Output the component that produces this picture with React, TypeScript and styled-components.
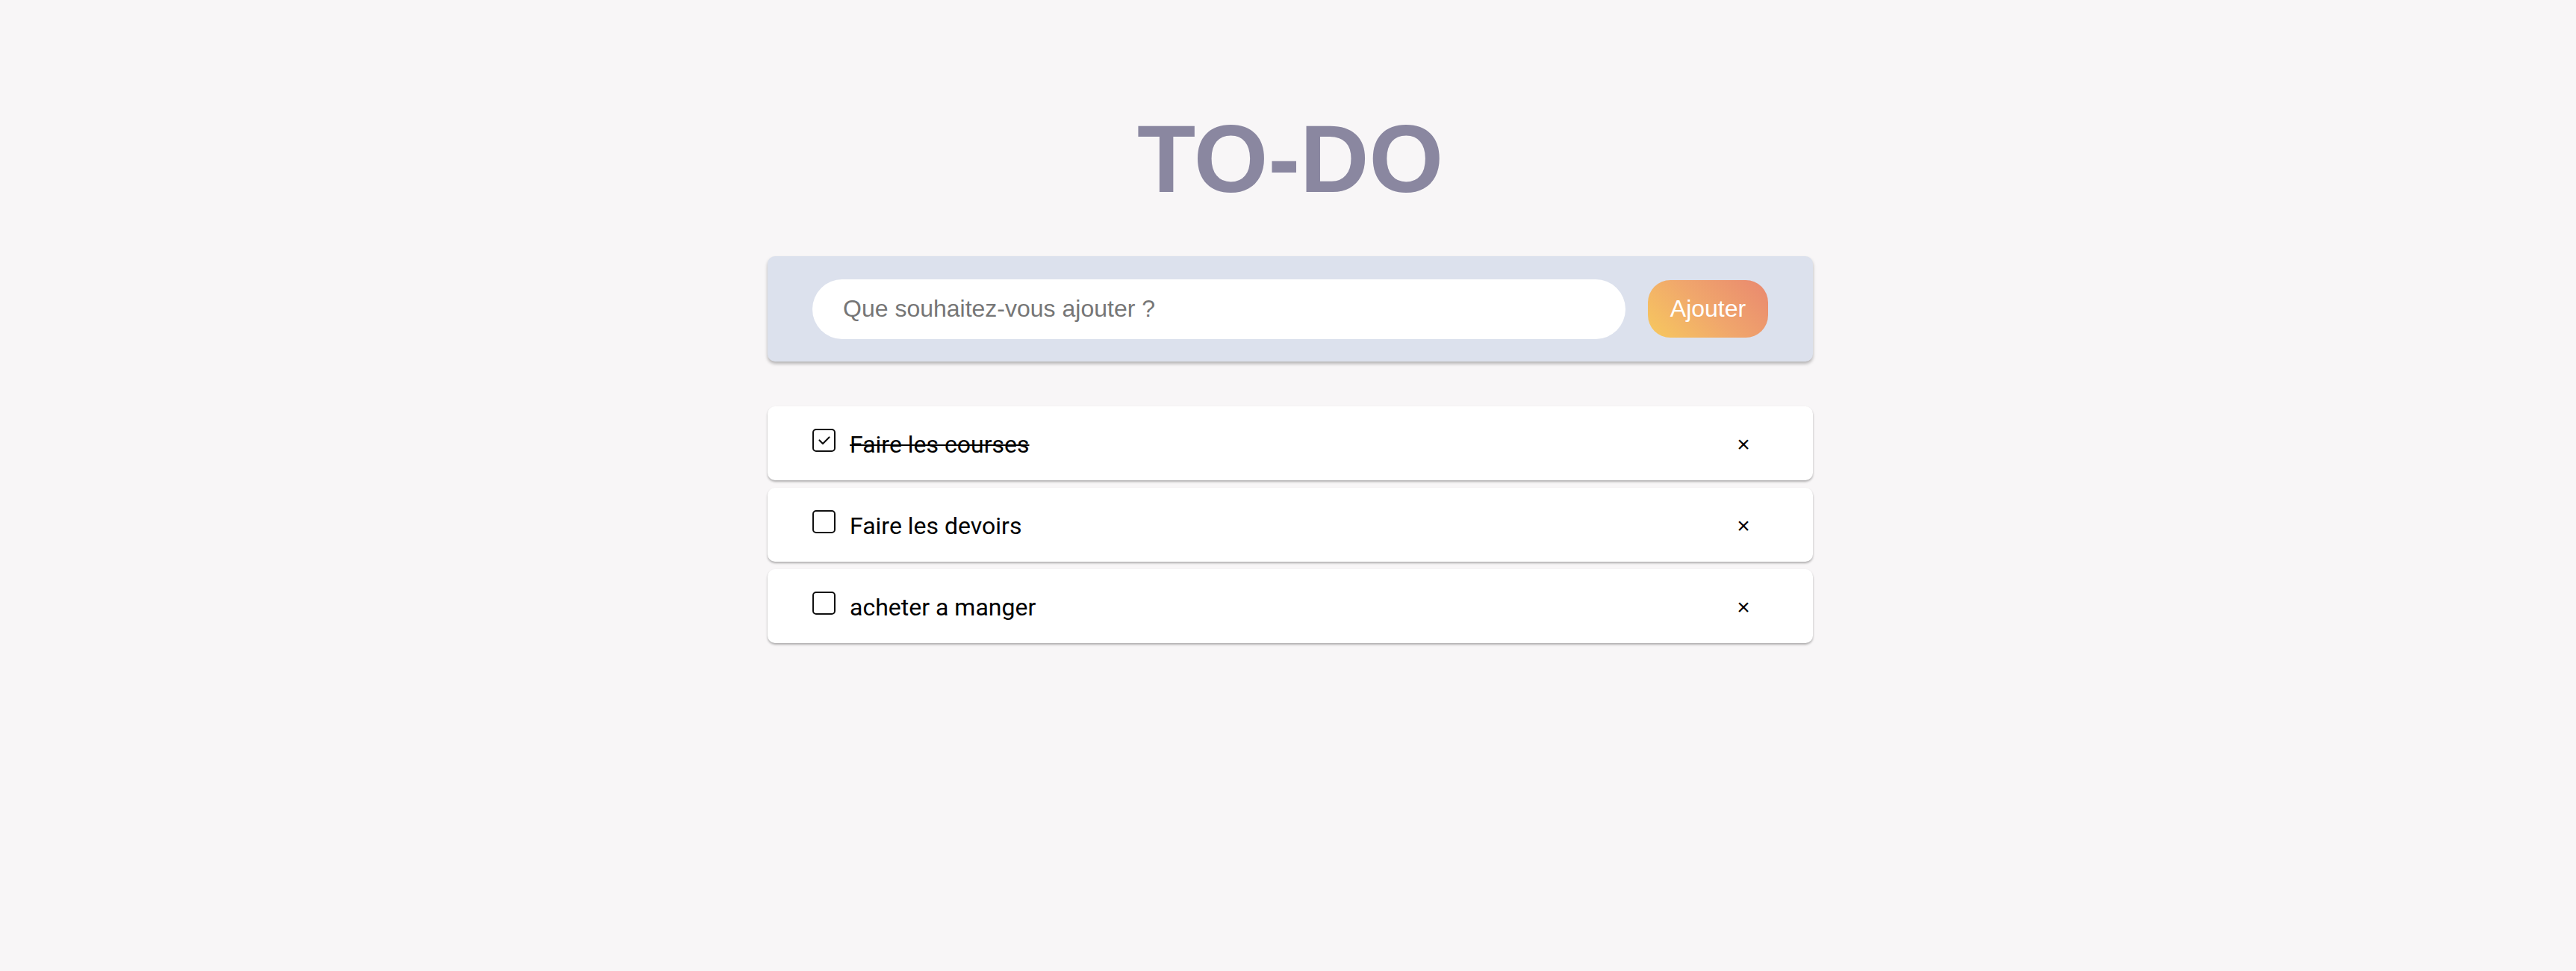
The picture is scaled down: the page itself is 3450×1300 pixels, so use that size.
import React, { useState } from "react";
import styled, { createGlobalStyle } from "styled-components";

const GlobalStyle = createGlobalStyle`
  html, body {
    margin: 0;
    padding: 0;
    background: #f8f6f7;
  }
  * { box-sizing: border-box; }
`;

const Page = styled.main`
  min-height: 1300px;
  display: flex;
  flex-direction: column;
  align-items: center;
  padding: 149px 0 0 6px;
`;

const Title = styled.h1`
  margin: 0;
  font-family: "Liberation Sans", Arial, sans-serif;
  font-weight: 700;
  font-size: 128px;
  line-height: 1;
  color: #8a87a0;
`;

const Form = styled.form`
  margin-top: 66px;
  width: 1400px;
  height: 141px;
  display: flex;
  align-items: center;
  gap: 30px;
  padding: 0 60px;
  background: #dce1ed;
  border-radius: 10px;
  box-shadow: 0 3px 4px rgba(0, 0, 0, 0.28);
`;

const Input = styled.input`
  flex: 1;
  height: 80px;
  border: none;
  outline: none;
  border-radius: 40px;
  background: #ffffff;
  padding: 0 0 0 41px;
  font-family: "Liberation Sans", Arial, sans-serif;
  font-size: 32px;
  color: #222;
  &::placeholder {
    color: #767676;
  }
`;

const AddButton = styled.button`
  height: 77px;
  width: 161px;
  border: none;
  border-radius: 30px;
  background: linear-gradient(45deg, #f7c95e 0%, #f0a66c 50%, #e9886f 100%);
  color: #ffffff;
  font-family: "Liberation Sans", Arial, sans-serif;
  font-size: 32px;
  cursor: pointer;
  padding: 0;
`;

const List = styled.ul`
  list-style: none;
  margin: 60px 0 0;
  padding: 0;
  width: 1400px;
  display: flex;
  flex-direction: column;
  gap: 10px;
`;

const Item = styled.li`
  height: 99px;
  display: flex;
  align-items: center;
  padding: 0 60px;
  background: #ffffff;
  border-radius: 10px;
  box-shadow: 0 2px 3px rgba(0, 0, 0, 0.3);
`;

const Box = styled.span`
  width: 31px;
  height: 31px;
  flex: none;
  border: 2px solid #111;
  border-radius: 5px;
  display: flex;
  align-items: center;
  justify-content: center;
  margin: 0 19px 8px 0;
  cursor: pointer;
`;

const Label = styled.span<{ $done: boolean }>`
  flex: 1;
  font-family: Roboto, "Liberation Sans", sans-serif;
  font-size: 32px;
  color: #000;
  padding-top: 2px;
  text-decoration: ${(p) => (p.$done ? "line-through" : "none")};
  text-decoration-thickness: 2px;
`;

const Remove = styled.button`
  width: 66px;
  border: none;
  background: transparent;
  padding: 0;
  font-family: "Liberation Sans", Arial, sans-serif;
  font-size: 30px;
  color: #000;
  cursor: pointer;
  margin-top: 2px;
`;

type Todo = { id: number; text: string; done: boolean };

export default function App() {
  const [todos, setTodos] = useState<Todo[]>([
    { id: 1, text: "Faire les courses", done: true },
    { id: 2, text: "Faire les devoirs", done: false },
    { id: 3, text: "acheter a manger", done: false },
  ]);
  const [value, setValue] = useState("");

  const toggle = (id: number) =>
    setTodos((t) => t.map((x) => (x.id === id ? { ...x, done: !x.done } : x)));
  const remove = (id: number) => setTodos((t) => t.filter((x) => x.id !== id));

  return (
    <>
      <GlobalStyle />
      <Page>
        <Title>TO-DO</Title>
        <Form
          onSubmit={(e) => {
            e.preventDefault();
            if (!value.trim()) return;
            setTodos((t) => [...t, { id: Date.now(), text: value, done: false }]);
            setValue("");
          }}
        >
          <Input
            placeholder="Que souhaitez-vous ajouter ?"
            value={value}
            onChange={(e) => setValue(e.target.value)}
          />
          <AddButton type="submit">Ajouter</AddButton>
        </Form>
        <List>
          {todos.map((t) => (
            <Item key={t.id}>
              <Box onClick={() => toggle(t.id)}>
                {t.done && (
                  <svg width="18" height="14" viewBox="0 0 18 14">
                    <path
                      d="M2.5 6.5 L7 11 L15.5 2.5"
                      fill="none"
                      stroke="#111"
                      strokeWidth="2.2"
                      strokeLinecap="round"
                      strokeLinejoin="round"
                    />
                  </svg>
                )}
              </Box>
              <Label $done={t.done}>{t.text}</Label>
              <Remove onClick={() => remove(t.id)}>×</Remove>
            </Item>
          ))}
        </List>
      </Page>
    </>
  );
}
